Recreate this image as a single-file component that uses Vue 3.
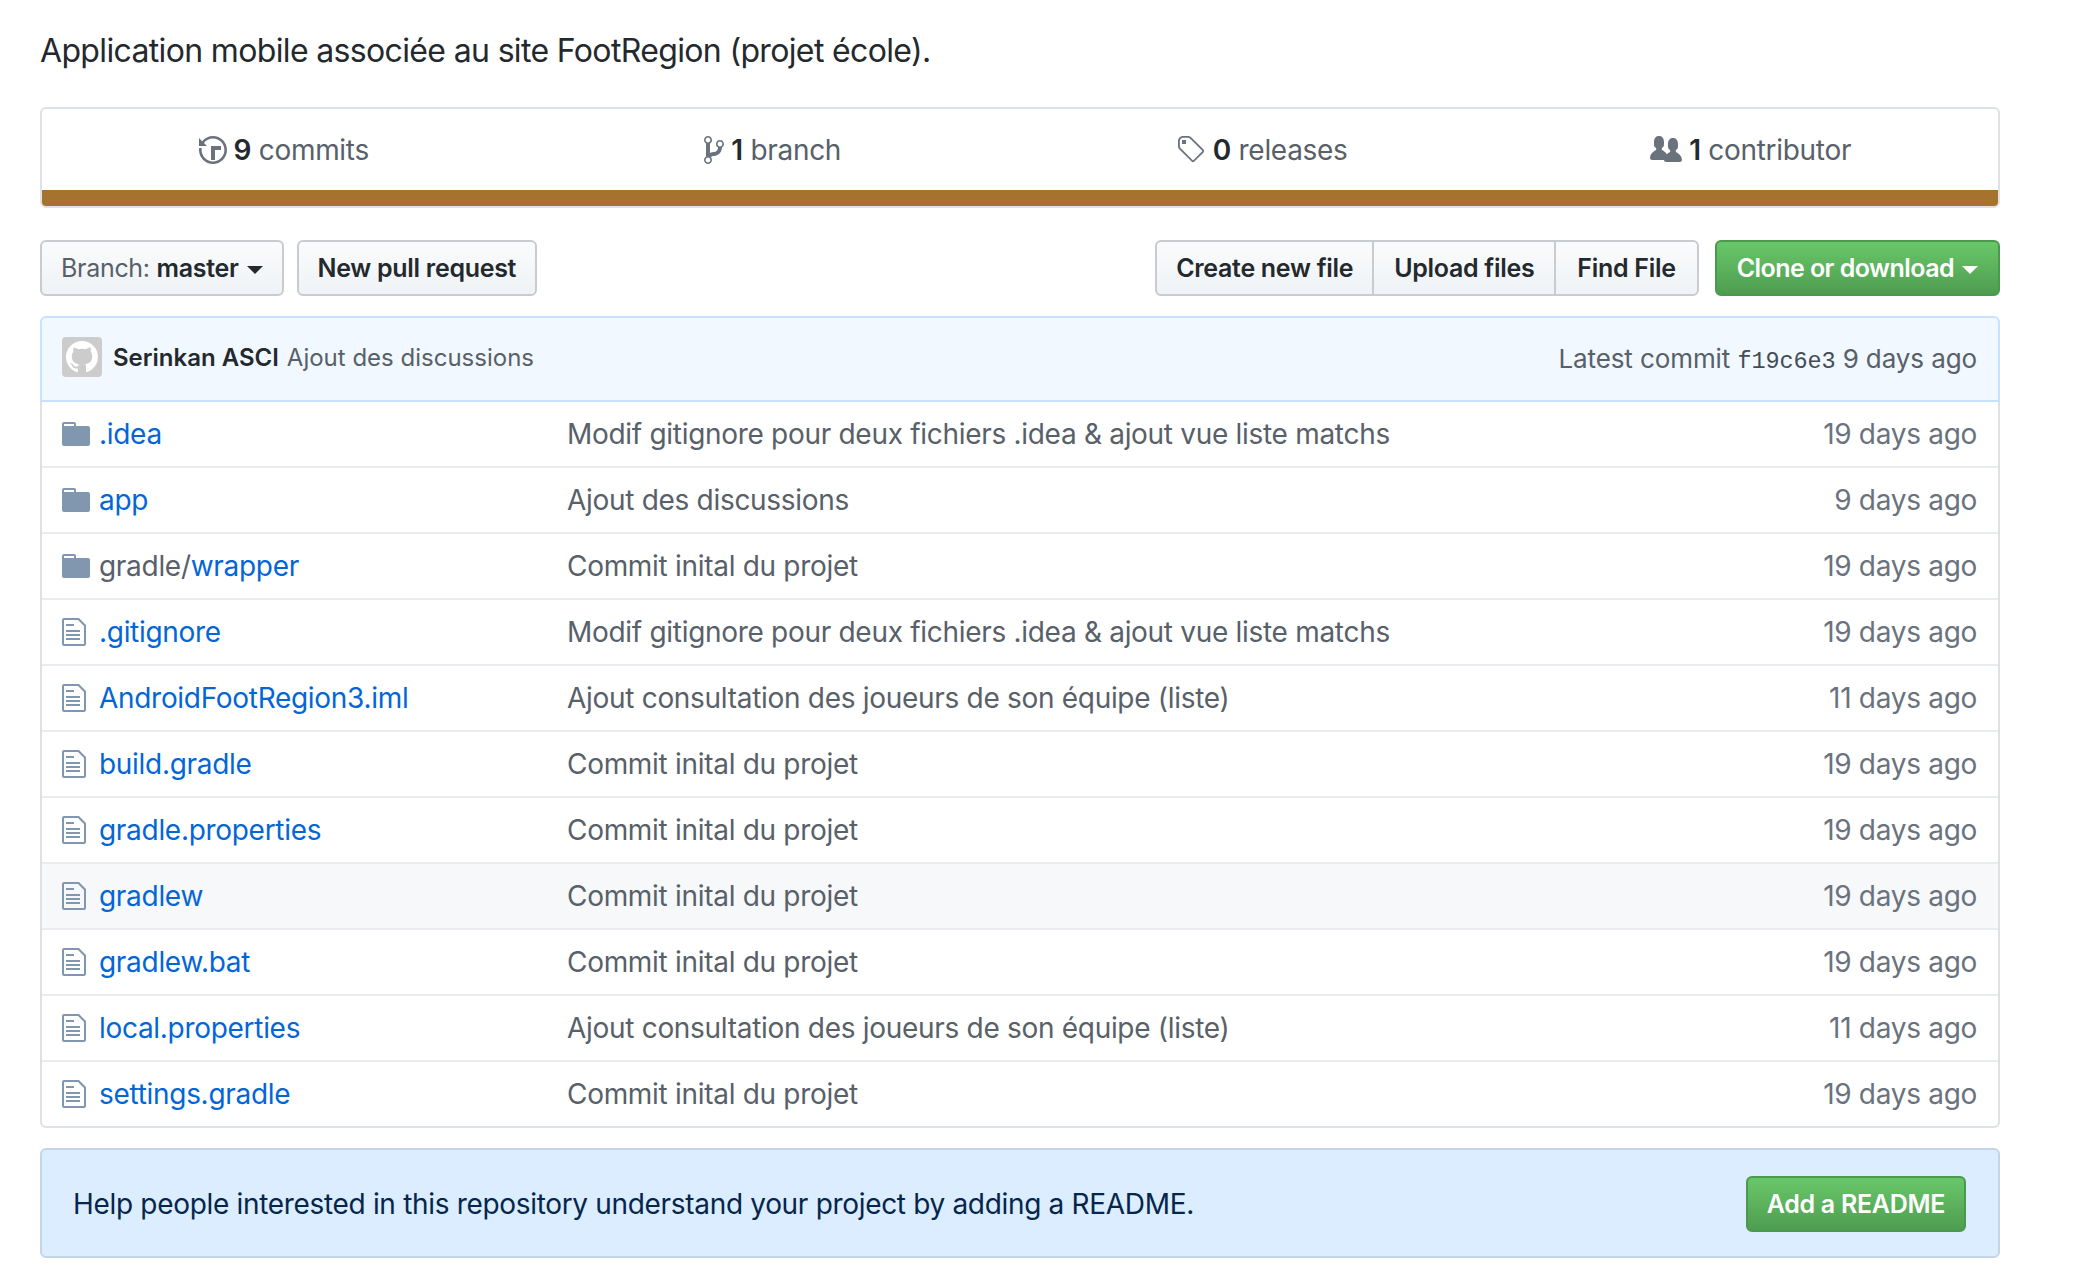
<script setup>
// liste des fichiers du depot
const files = [
  { type: 'dir', name: '.idea', msg: 'Modif gitignore pour deux fichiers .idea & ajout vue liste matchs', age: '19 days ago' },
  { type: 'dir', name: 'app', msg: 'Ajout des discussions', age: '9 days ago' },
  { type: 'dir', prefix: 'gradle/', name: 'wrapper', msg: 'Commit inital du projet', age: '19 days ago' },
  { type: 'file', name: '.gitignore', msg: 'Modif gitignore pour deux fichiers .idea & ajout vue liste matchs', age: '19 days ago' },
  { type: 'file', name: 'AndroidFootRegion3.iml', msg: 'Ajout consultation des joueurs de son équipe (liste)', age: '11 days ago' },
  { type: 'file', name: 'build.gradle', msg: 'Commit inital du projet', age: '19 days ago' },
  { type: 'file', name: 'gradle.properties', msg: 'Commit inital du projet', age: '19 days ago' },
  { type: 'file', name: 'gradlew', msg: 'Commit inital du projet', age: '19 days ago', hover: true },
  { type: 'file', name: 'gradlew.bat', msg: 'Commit inital du projet', age: '19 days ago' },
  { type: 'file', name: 'local.properties', msg: 'Ajout consultation des joueurs de son équipe (liste)', age: '11 days ago' },
  { type: 'file', name: 'settings.gradle', msg: 'Commit inital du projet', age: '19 days ago' }
]
</script>

<template>
  <div class="page">
    <p class="desc">Application mobile associée au site FootRegion (projet école).</p>

    <div class="summary">
      <ul class="stats">
        <li>
          <svg class="ico" width="28" height="32" viewBox="0 0 14 16"><path d="M8 13H6V6h5v2H8v5zM7 1C4.81 1 2.87 2.02 1.59 3.59L0 2v4h4L2.5 4.5C3.55 3.17 5.17 2.3 7 2.3c3.14 0 5.7 2.56 5.7 5.7s-2.56 5.7-5.7 5.7A5.71 5.71 0 0 1 1.3 8c0-.34.03-.67.09-1H.08C.03 7.33 0 7.66 0 8c0 3.86 3.14 7 7 7s7-3.14 7-7-3.14-7-7-7z"/></svg>
          <b>9</b> commits
        </li>
        <li>
          <svg class="ico" width="20" height="32" viewBox="0 0 10 16"><path d="M10 5c0-1.11-.89-2-2-2a1.993 1.993 0 0 0-1 3.72v.3c-.02.52-.23.98-.63 1.38-.4.4-.86.61-1.38.63-.83.02-1.48.16-2 .45V4.72a1.993 1.993 0 0 0-1-3.72C.88 1 0 1.89 0 3a2 2 0 0 0 1 1.72v6.56c-.59.35-1 .99-1 1.72 0 1.11.89 2 2 2 1.11 0 2-.89 2-2 0-.53-.2-1-.53-1.36.09-.06.48-.41.59-.47.25-.11.56-.17.94-.17 1.05-.05 1.95-.45 2.75-1.25S8.95 7.77 9 6.73h-.02C9.59 6.37 10 5.73 10 5zM2 1.8c.66 0 1.2.55 1.2 1.2 0 .65-.55 1.2-1.2 1.2C1.35 4.2.8 3.65.8 3c0-.65.55-1.2 1.2-1.2zm0 12.41c-.66 0-1.2-.55-1.2-1.2 0-.65.55-1.2 1.2-1.2.65 0 1.2.55 1.2 1.2 0 .65-.55 1.2-1.2 1.2zm6-8c-.66 0-1.2-.55-1.2-1.2 0-.65.55-1.2 1.2-1.2.65 0 1.2.55 1.2 1.2 0 .65-.55 1.2-1.2 1.2z"/></svg>
          <b>1</b> branch
        </li>
        <li>
          <svg class="ico" width="30" height="32" viewBox="0 0 15 16"><path d="M7.73 1.73C7.26 1.26 6.62 1 5.96 1H3.5C2.13 1 1 2.13 1 3.5v2.47c0 .66.27 1.3.73 1.77l6.06 6.06c.39.39 1.02.39 1.41 0l4.59-4.59a.996.996 0 0 0 0-1.41L7.73 1.73zM2.38 7.09c-.31-.3-.47-.7-.47-1.13V3.5c0-.88.72-1.59 1.59-1.59h2.47c.42 0 .83.16 1.13.47l6.14 6.13-4.73 4.73-6.13-6.15zM3.01 3h2v2H3V3h.01z"/></svg>
          <b>0</b> releases
        </li>
        <li>
          <svg class="ico" width="32" height="32" viewBox="0 0 16 16"><path d="M16 12.999c0 .439-.45 1-1 1H7.995c-.539 0-.994-.447-.995-.999H1c-.54 0-1-.561-1-1 0-2.634 3-4 3-4s.229-.409 0-1c-.841-.621-1.058-.59-1-3 .058-2.419 1.367-3 2.5-3s2.442.58 2.5 3c.058 2.41-.159 2.379-1 3-.229.59 0 1 0 1s1.549.711 2.42 2.088C9.196 9.369 10 8.999 10 8.999s.229-.409 0-1c-.841-.62-1.058-.59-1-3 .058-2.419 1.367-3 2.5-3s2.437.581 2.495 3c.059 2.41-.158 2.38-1 3-.229.59 0 1 0 1S16 10.365 16 12.999z"/></svg>
          <b>1</b> contributor
        </li>
      </ul>
      <div class="langbar"></div>
    </div>

    <div class="toolbar">
      <button class="btn branch">Branch: <b>master</b><i class="caret"></i></button>
      <button class="btn">New pull request</button>
      <div class="spacer"></div>
      <div class="group">
        <button class="btn">Create new file</button>
        <button class="btn">Upload files</button>
        <button class="btn">Find File</button>
      </div>
      <button class="btn green clone">Clone or download<i class="caret"></i></button>
    </div>

    <div class="commit">
      <div class="avatar">
        <svg width="32" height="32" viewBox="0 0 16 16"><path d="M8 0C3.58 0 0 3.58 0 8c0 3.54 2.29 6.53 5.47 7.59.4.07.55-.17.55-.38 0-.19-.01-.82-.01-1.49-2.01.37-2.53-.49-2.69-.94-.09-.23-.48-.94-.82-1.13-.28-.15-.68-.52-.01-.53.63-.01 1.08.58 1.23.82.72 1.21 1.87.87 2.33.66.07-.52.28-.87.51-1.07-1.78-.2-3.64-.89-3.64-3.95 0-.87.31-1.59.82-2.15-.08-.2-.36-1.02.08-2.12 0 0 .67-.21 2.2.82.64-.18 1.32-.27 2-.27.68 0 1.36.09 2 .27 1.53-1.04 2.2-.82 2.2-.82.44 1.1.16 1.92.08 2.12.51.56.82 1.27.82 2.15 0 3.07-1.87 3.75-3.65 3.95.29.25.54.73.54 1.48 0 1.07-.01 1.93-.01 2.2 0 .21.15.46.55.38A8.013 8.013 0 0 0 16 8c0-4.42-3.58-8-8-8z"/></svg>
      </div>
      <span class="author">Serinkan ASCI</span>
      <span class="commit-msg">Ajout des discussions</span>
      <div class="spacer"></div>
      <span class="latest">Latest commit <code>f19c6e3</code> 9 days ago</span>
    </div>

    <table class="files">
      <tbody>
        <tr v-for="f in files" :key="f.name" :class="{ hover: f.hover }">
          <td class="icon">
            <svg v-if="f.type === 'dir'" width="28" height="32" viewBox="0 0 14 16"><path d="M13 4H7V3c0-.66-.31-1-1-1H1c-.55 0-1 .45-1 1v10c0 .55.45 1 1 1h12c.55 0 1-.45 1-1V5c0-.55-.45-1-1-1zM6 4H1V3h5v1z"/></svg>
            <svg v-else width="24" height="32" viewBox="0 0 12 16"><path d="M6 5H2V4h4v1zM2 8h7V7H2v1zm0 2h7V9H2v1zm0 2h7v-1H2v1zm10-7.5V14c0 .55-.45 1-1 1H1c-.55 0-1-.45-1-1V2c0-.55.45-1 1-1h7.5L12 4.5zM11 5L8 2H1v12h10V5z"/></svg>
          </td>
          <td class="name"><span v-if="f.prefix" class="prefix">{{ f.prefix }}</span><a>{{ f.name }}</a></td>
          <td class="msg">{{ f.msg }}</td>
          <td class="age">{{ f.age }}</td>
        </tr>
      </tbody>
    </table>

    <div class="readme">
      <span>Help people interested in this repository understand your project by adding a README.</span>
      <button class="btn green">Add a README</button>
    </div>
  </div>
</template>

<style>
body { background: #fff; }
</style>

<style scoped>
.page {
  width: 1960px;
  margin-left: 40px;
  font-family: Inter, "Liberation Sans", sans-serif;
  font-size: 28px;
  letter-spacing: -0.3px;
  color: #24292e;
}

.desc {
  margin: 0;
  padding-top: 31px;
  height: 107px;
  box-sizing: border-box;
  font-size: 32px;
  line-height: 40px;
  letter-spacing: -0.65px;
}

.summary {
  height: 101px;
  box-sizing: border-box;
  border: 2px solid #dfe2e5;
  border-radius: 6px;
  display: flex;
  flex-direction: column;
  overflow: hidden;
}
.stats {
  flex: 1;
  display: grid;
  grid-template-columns: repeat(4, 1fr);
  list-style: none;
  margin: 0;
  padding: 0;
}
.stats li {
  display: flex;
  align-items: center;
  justify-content: center;
  white-space: pre;
  color: #586069;
  padding-left: 2px;
}
.stats b { color: #24292e; font-weight: 600; margin-left: 7px; }
.ico { fill: #6a737d; }
.langbar { height: 16px; background: #a5722f; }

.toolbar {
  display: flex;
  align-items: stretch;
  gap: 13px;
  height: 56px;
  margin-top: 32px;
}
.spacer { flex: 1; }
.btn {
  font: 600 25px/1 Inter, "Liberation Sans", sans-serif;
  letter-spacing: -0.3px;
  color: #24292e;
  padding: 0 19px;
  height: 56px;
  border: 2px solid #c8cbcf;
  border-radius: 6px;
  background: linear-gradient(#fafbfc, #eff3f6);
  white-space: nowrap;
}
.branch { color: #586069; font-weight: 400; }
.branch b { color: #24292e; font-weight: 600; }
.caret {
  display: inline-block;
  margin-left: 8px;
  vertical-align: 3px;
  border: 8px solid transparent;
  border-top-color: currentColor;
  border-bottom: 0;
}
.branch .caret { color: #24292e; }
.group { display: flex; }
.group .btn { border-radius: 0; margin-left: -2px; padding: 0 20px; }
.group .btn:first-child { border-radius: 6px 0 0 6px; margin-left: 0; padding: 0 19px; }
.group .btn:last-child { border-radius: 0 6px 6px 0; padding: 0 21px; }
.clone { margin-left: 3px; padding: 0 20px; letter-spacing: -0.55px; }
.green {
  color: #fff;
  background: linear-gradient(#69c76a, #4f9d50);
  border-color: #4a9a4d;
}

.commit {
  display: flex;
  align-items: center;
  height: 86px;
  box-sizing: border-box;
  margin-top: 20px;
  padding: 0 21px 0 20px;
  background: #f1f8ff;
  border: 2px solid #c8e1ff;
  border-radius: 6px 6px 0 0;
  font-size: 24px;
  letter-spacing: 0;
  color: #586069;
}
.avatar {
  width: 40px;
  height: 40px;
  margin: -5px 11px 0 0;
  background: #ccc;
  border-radius: 4px;
  display: flex;
  align-items: center;
  justify-content: center;
  fill: #fff;
}
.author { color: #24292e; font-weight: 600; margin-right: 8px; margin-top: -4px; }
.commit-msg { margin-top: -4px; }
.latest { white-space: pre; font-size: 26px; letter-spacing: -0.1px; }
.latest code { font: 23.5px "Liberation Mono", monospace; color: #444d56; }

.files {
  width: 100%;
  border-collapse: separate;
  border-spacing: 0;
  border: 2px solid #dfe2e5;
  border-top: 0;
  border-radius: 0 0 6px 6px;
  table-layout: fixed;
}
.files td {
  height: 64px;
  padding: 0;
  border-top: 2px solid #eaecef;
  white-space: nowrap;
}
.files tr:first-child td { border-top: 0; height: 64px; }
.files tr.hover td { background: #f6f8fa; }
.icon { width: 57px; padding-left: 20px !important; box-sizing: border-box; }
.icon svg { display: block; fill: #8197b0; }
.name { width: 468px; color: #586069; }
.name a { color: #0366d6; }
.msg { color: #586069; }
.age { width: 300px; text-align: right; color: #6a737d; padding-right: 21px !important; box-sizing: border-box; }

.readme {
  display: flex;
  align-items: center;
  justify-content: space-between;
  height: 110px;
  box-sizing: border-box;
  margin-top: 20px;
  padding: 2px 32px 0 31px;
  background: #dbedff;
  border: 2px solid #c5d5e5;
  border-radius: 6px;
  letter-spacing: -0.32px;
  color: #05264c;
}
</style>
